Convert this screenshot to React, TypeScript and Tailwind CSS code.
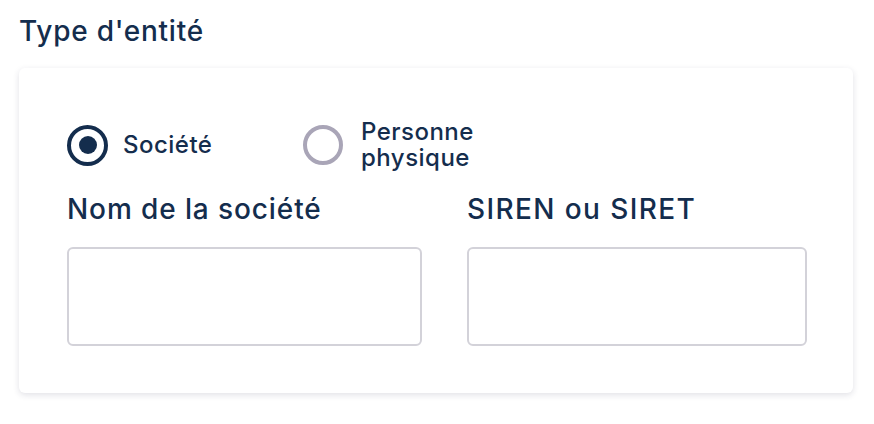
export default function App() {
  return (
    <div className="w-[874px] h-[424px] bg-white px-[19px] pt-[13px] font-['Inter',sans-serif] text-[#142d4d]">
      <h2 className="text-[28px] font-medium leading-[36px] tracking-[0.027em]">Type d'entité</h2>

      <div className="mt-[19px] w-[834px] rounded-[6px] bg-white shadow-[0_2px_6px_rgba(40,40,80,0.14)] pl-[48px] pr-[45px] pt-[51px] pb-[47px]">
        <div className="flex items-center">
          <label className="w-[236px] flex items-center gap-[15px]">
            <span className="w-[41px] h-[41px] rounded-full border-[4.5px] border-[#142d4d] flex items-center justify-center">
              <span className="w-[18px] h-[18px] rounded-full bg-[#142d4d]" />
            </span>
            <span className="text-[24px] font-medium leading-[26px] tracking-[0.02em]">Société</span>
          </label>
          <label className="flex items-center gap-[18px]">
            <span className="w-[40px] h-[40px] rounded-full border-[4px] border-[#a9a5b7]" />
            <span className="flex flex-col text-[24px] font-medium leading-[26px] tracking-[0.02em]">
              <span>Personne</span>
              <span>physique</span>
            </span>
          </label>
        </div>

        <div className="mt-[22px] grid grid-cols-[355px_340px] gap-x-[45px]">
          <div className="flex flex-col">
            <span className="text-[28px] font-medium leading-[32px] tracking-[0.032em] whitespace-nowrap">Nom de la société</span>
            <input className="mt-[22px] h-[99px] rounded-[6px] border-2 border-[#d3d2d9] bg-white outline-none" />
          </div>
          <div className="flex flex-col">
            <span className="text-[28px] font-medium leading-[32px] tracking-[0.05em] whitespace-nowrap">SIREN ou SIRET</span>
            <input className="mt-[22px] h-[99px] rounded-[6px] border-2 border-[#d3d2d9] bg-white outline-none" />
          </div>
        </div>
      </div>
    </div>
  );
}
